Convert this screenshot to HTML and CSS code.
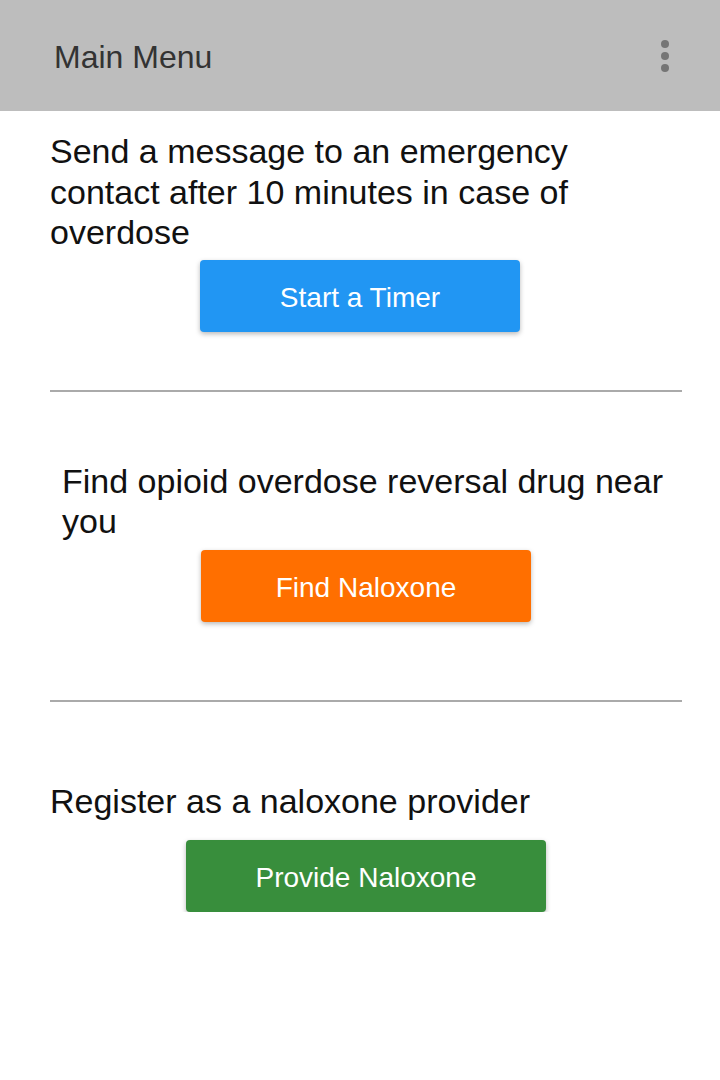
FILE: index.html
```html
<!DOCTYPE html>
<html lang="en">
<head>
<meta charset="utf-8">
<title>Main Menu</title>
<link rel="stylesheet" href="styles.css">
</head>
<body>
<header class="appbar">
  <h1 class="appbar-title">Main Menu</h1>
  <button class="overflow" aria-label="More options">
    <svg width="10" height="34" viewBox="0 0 10 34">
      <circle cx="5" cy="5" r="4" fill="#757575"/>
      <circle cx="5" cy="17" r="4" fill="#757575"/>
      <circle cx="5" cy="29" r="4" fill="#757575"/>
    </svg>
  </button>
</header>
<main class="content">
  <section class="section section-timer">
    <p class="desc">Send a message to an emergency contact after 10 minutes in case of overdose</p>
    <button class="btn btn-blue">Start a Timer</button>
  </section>
  <hr class="divider">
  <section class="section section-find">
    <p class="desc desc-indent">Find opioid overdose reversal drug near you</p>
    <button class="btn btn-orange">Find Naloxone</button>
  </section>
  <hr class="divider">
  <section class="section section-provide">
    <p class="desc">Register as a naloxone provider</p>
    <button class="btn btn-green">Provide Naloxone</button>
  </section>
</main>
</body>
</html>
```

FILE: styles.css
```css
html, body {
  margin: 0;
  padding: 0;
  background: #ffffff;
  font-family: "Liberation Sans", Arial, sans-serif;
}

.appbar {
  height: 111px;
  background: #bdbdbd;
  display: flex;
  align-items: center;
  justify-content: space-between;
  padding: 0 50px 0 54px;
  box-sizing: border-box;
}

.appbar-title {
  margin: 0;
  font-weight: normal;
  font-size: 32px;
  color: #333333;
  line-height: 1;
  padding-top: 2px;
}

.overflow {
  background: none;
  border: 0;
  padding: 0;
  display: flex;
}

.content {
  padding: 0 38px 0 50px;
  display: flex;
  flex-direction: column;
}

.section {
  display: flex;
  flex-direction: column;
  align-items: center;
}

.desc {
  align-self: stretch;
  margin: 0;
  font-size: 34px;
  line-height: 40.5px;
  color: #111111;
}

.desc-indent {
  padding-left: 12px;
}

.section-timer {
  padding-top: 20px;
}

.section-find {
  padding-top: 69px;
}

.section-provide {
  padding-top: 79px;
}

.btn {
  height: 72px;
  border: 0;
  border-radius: 4px;
  color: #ffffff;
  font-family: "Liberation Sans", Arial, sans-serif;
  font-size: 28px;
  box-shadow: 0 2px 5px rgba(0, 0, 0, 0.28);
  padding: 4px 0 0;
}

.btn-blue {
  width: 320px;
  margin-top: 7px;
  margin-right: 12px;
  background: #2196f3;
}

.btn-orange {
  width: 330px;
  margin-top: 8px;
  background: #ff6f00;
}

.btn-green {
  width: 360px;
  margin-top: 19px;
  background: #388e3c;
}

.divider {
  border: 0;
  height: 2px;
  background: #aaaaaa;
  margin: 0;
}

.section-timer + .divider {
  margin-top: 58px;
}

.section-find + .divider {
  margin-top: 78px;
}
```
